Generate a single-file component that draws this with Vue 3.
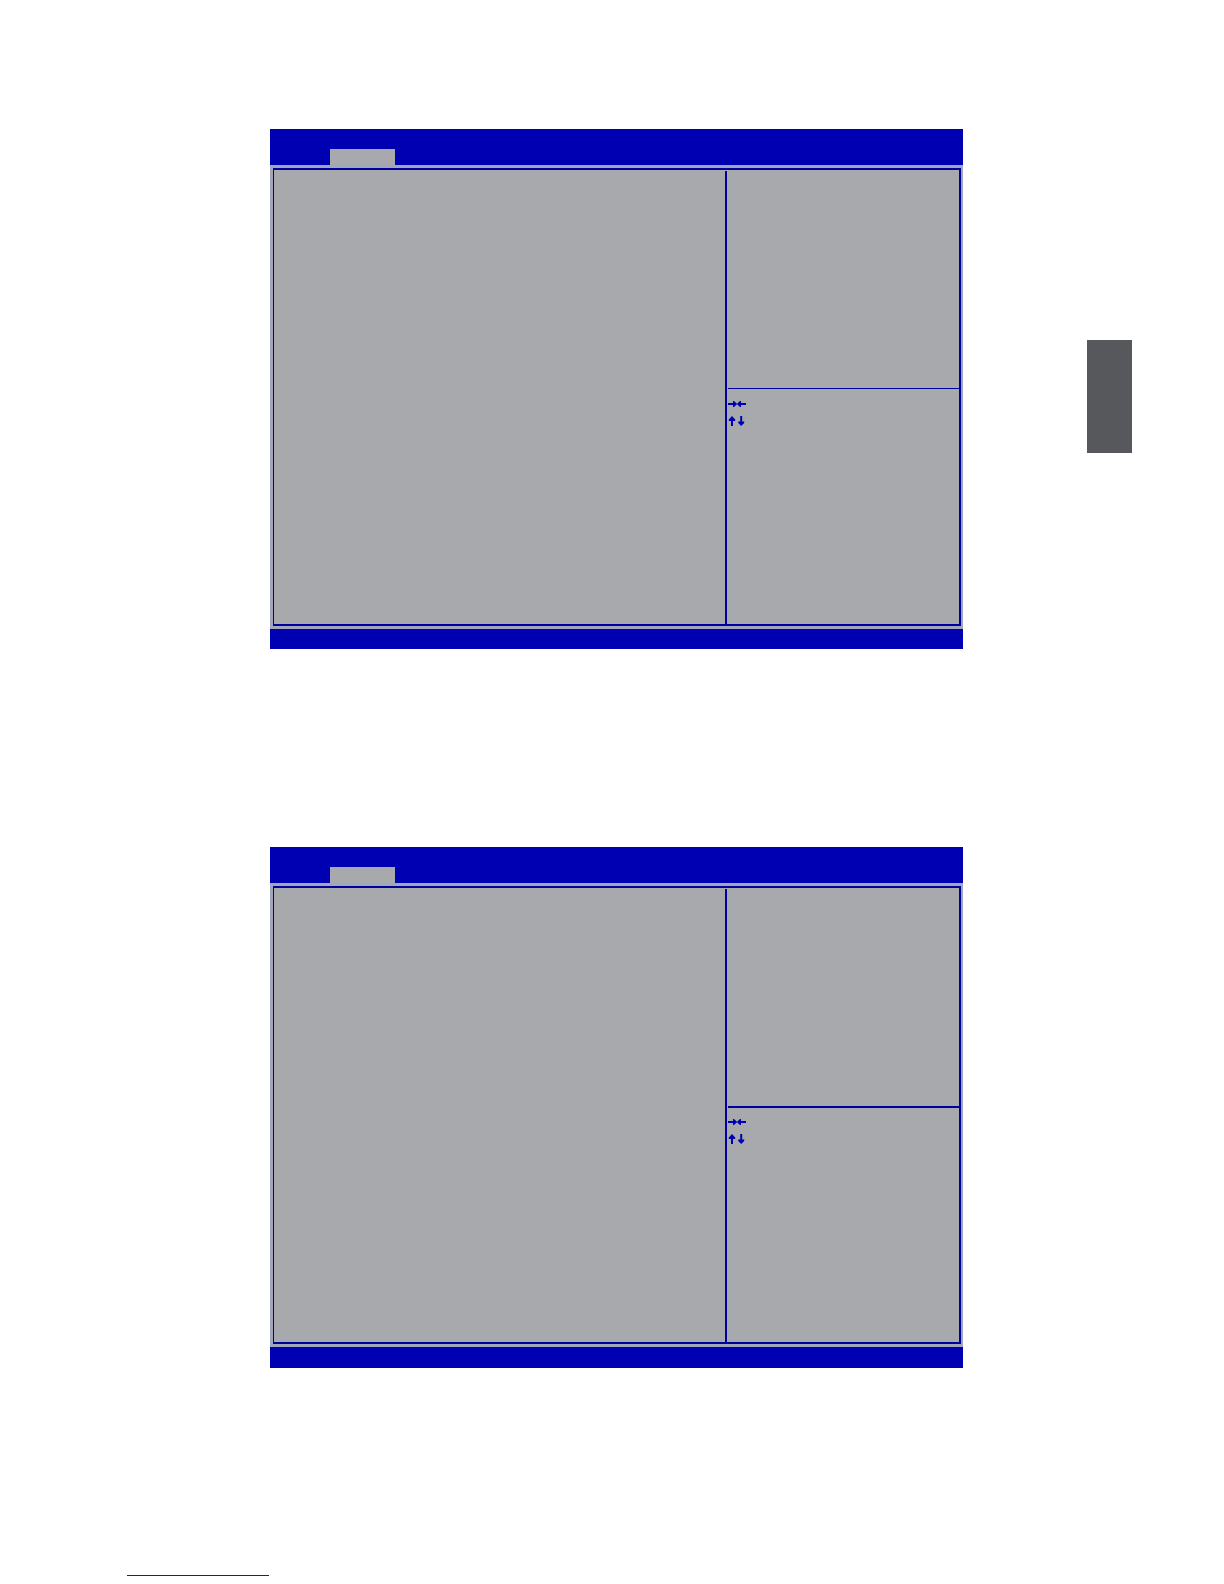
<template>
  <div class="page">
    <main class="content">
      <section
        v-for="screen in screens"
        :key="screen.id"
        class="screen"
        :class="screen.id"
      >
        <header class="title-bar">
          <div class="tab"></div>
        </header>

        <div class="body">
          <div class="frame">
            <div class="settings"></div>
            <aside class="side">
              <div class="help"></div>
              <div class="keys">
                <svg class="arrows" viewBox="0 0 18 28" aria-hidden="true">
                  <!-- Right and left -->
                  <path d="M0 4H5V2H6L9.2 5L6 8H5V6H0Z" />
                  <path d="M18 4H13V2H12L8.8 5L12 8H13V6H18Z" />
                  <!-- Up and down -->
                  <path d="M4 17L7.2 20.5V22H5V27H3V22H0.8V20.5Z" />
                  <path d="M12.2 17H14.2V22.5H16.2V24L13.2 27L10.2 24V22.5H12.2Z" />
                </svg>
              </div>
            </aside>
          </div>
        </div>

        <footer class="bottom-bar"></footer>
      </section>
    </main>

    <div class="chapter-mark"></div>

    <a class="page-link" href="#" aria-label="Link"></a>
  </div>
</template>

<script setup>
const screens = [{ id: "first" }, { id: "second" }];
</script>

<style>
body {
  margin: 0;
  background: #ffffff;
}
</style>

<style scoped>
.page {
  display: grid;
  grid-template-columns: 270fr 693fr 124fr 45px 92fr;
  align-items: start;
  padding-top: 129px;
  padding-bottom: 8px;
  font-family: "Liberation Sans", sans-serif;
}

.content {
  grid-column: 2;
  display: flex;
  flex-direction: column;
  gap: 198px;
}

.title-bar {
  display: flex;
  align-items: flex-end;
  height: 36px;
  padding-left: 60px;
  background: #0000b3;
}

.tab {
  width: 65px;
  height: 16px;
  background: #a7a9ac;
}

.body {
  padding: 3px 2px 3px 3px;
  background: #a2a6bd;
}

.frame {
  display: grid;
  grid-template-columns: 451fr 234fr;
  min-height: 453px;
  padding-top: 1px;
  border: 2px solid #00009f;
  border-left-width: 1px;
  background: #a7a9ac;
}

.side {
  display: flex;
  flex-direction: column;
  padding-left: 1px;
  border-left: 2px solid #00009f;
}

.help {
  height: 217px;
}

.keys {
  flex: 1;
  padding-top: 10px;
  border-top: 1px solid #00009f;
}

.second .keys {
  padding-top: 9px;
  border-top-width: 2px;
}

.arrows {
  display: block;
  width: 18px;
  height: 28px;
  fill: #0000b3;
}

.bottom-bar {
  height: 20px;
  background: #0000b3;
}

.second .bottom-bar {
  height: 21px;
}

/* Grey thumb index at the page edge */
.chapter-mark {
  grid-column: 4;
  height: 113px;
  margin-top: 211px;
  background: #57585b;
}

.page-link {
  grid-column: 1 / 3;
  width: 142px;
  height: 207px;
  margin-left: 127px;
  border-bottom: 1px solid #1a1a96;
}
</style>
